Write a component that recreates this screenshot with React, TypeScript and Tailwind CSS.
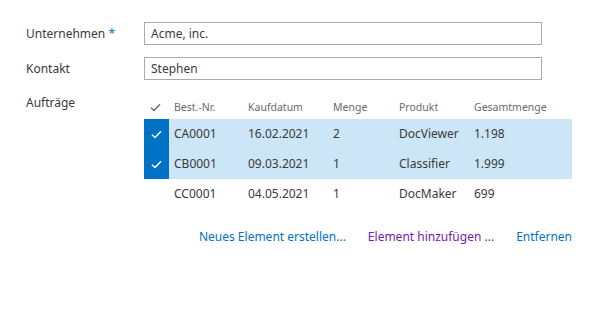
import React from "react";

interface Order {
  id: string;
  date: string;
  qty: string;
  product: string;
  total: string;
  selected: boolean;
}

const ORDERS: Order[] = [
  { id: "CA0001", date: "16.02.2021", qty: "2", product: "DocViewer", total: "1.198", selected: true },
  { id: "CB0001", date: "09.03.2021", qty: "1", product: "Classifier", total: "1.999", selected: true },
  { id: "CC0001", date: "04.05.2021", qty: "1", product: "DocMaker", total: "699", selected: false },
];

function Check({ color }: { color: string }) {
  return (
    <svg width="11" height="9" viewBox="0 0 11 9" fill="none">
      <polyline points="1,4.8 4,7.6 10,1.2" stroke={color} strokeWidth="1.4" />
    </svg>
  );
}

export default function App() {
  return (
    <div className="w-[606px] h-[312px] bg-white text-[#3a3a3a] text-[12px] font-['Noto_Sans',sans-serif] pl-[26px] pt-[22px]">
      {/* Unternehmen */}
      <div className="flex items-center h-[23px]">
        <div className="w-[118px]">
          Unternehmen <span className="text-[#0072c6]">*</span>
        </div>
        <div className="w-[398px] h-[23px] border border-[#ababab] px-[6px] flex items-center">
          Acme, inc.
        </div>
      </div>

      {/* Kontakt */}
      <div className="flex items-center h-[23px] mt-[12px]">
        <div className="w-[118px]">Kontakt</div>
        <div className="w-[398px] h-[23px] border border-[#ababab] px-[6px] flex items-center">
          Stephen
        </div>
      </div>

      {/* Aufträge */}
      <div className="flex mt-[16px]">
        <div className="w-[118px] leading-[15px] -mt-[1px]">Aufträge</div>
        <div className="w-[428px]">
          <div className="flex items-center h-[23px] text-[10.5px] text-[#6a6a6a]">
            <div className="w-[25px] flex justify-center pr-[3px]">
              <Check color="#6a6a6a" />
            </div>
            <div className="w-[79px] pl-[5px]">Best.-Nr.</div>
            <div className="w-[85px]">Kaufdatum</div>
            <div className="w-[66px]">Menge</div>
            <div className="w-[75px]">Produkt</div>
            <div className="flex-1">Gesamtmenge</div>
          </div>
          {ORDERS.map((o) => (
            <div
              key={o.id}
              className={`flex items-center h-[30px] ${o.selected ? "bg-[#cde6f7]" : ""}`}
            >
              <div
                className={`w-[25px] h-full flex items-center justify-center ${o.selected ? "bg-[#0072c6]" : ""}`}
              >
                {o.selected && <Check color="#ffffff" />}
              </div>
              <div className="w-[79px] pl-[5px]">{o.id}</div>
              <div className="w-[85px]">{o.date}</div>
              <div className="w-[66px]">{o.qty}</div>
              <div className="w-[75px]">{o.product}</div>
              <div className="flex-1">{o.total}</div>
            </div>
          ))}
          <div className="flex justify-end gap-[22px] mt-[19px]">
            <span className="text-[#0072c6]">Neues Element erstellen...</span>
            <span className="text-[#7719aa]">Element hinzufügen ...</span>
            <span className="text-[#0072c6]">Entfernen</span>
          </div>
        </div>
      </div>
    </div>
  );
}
